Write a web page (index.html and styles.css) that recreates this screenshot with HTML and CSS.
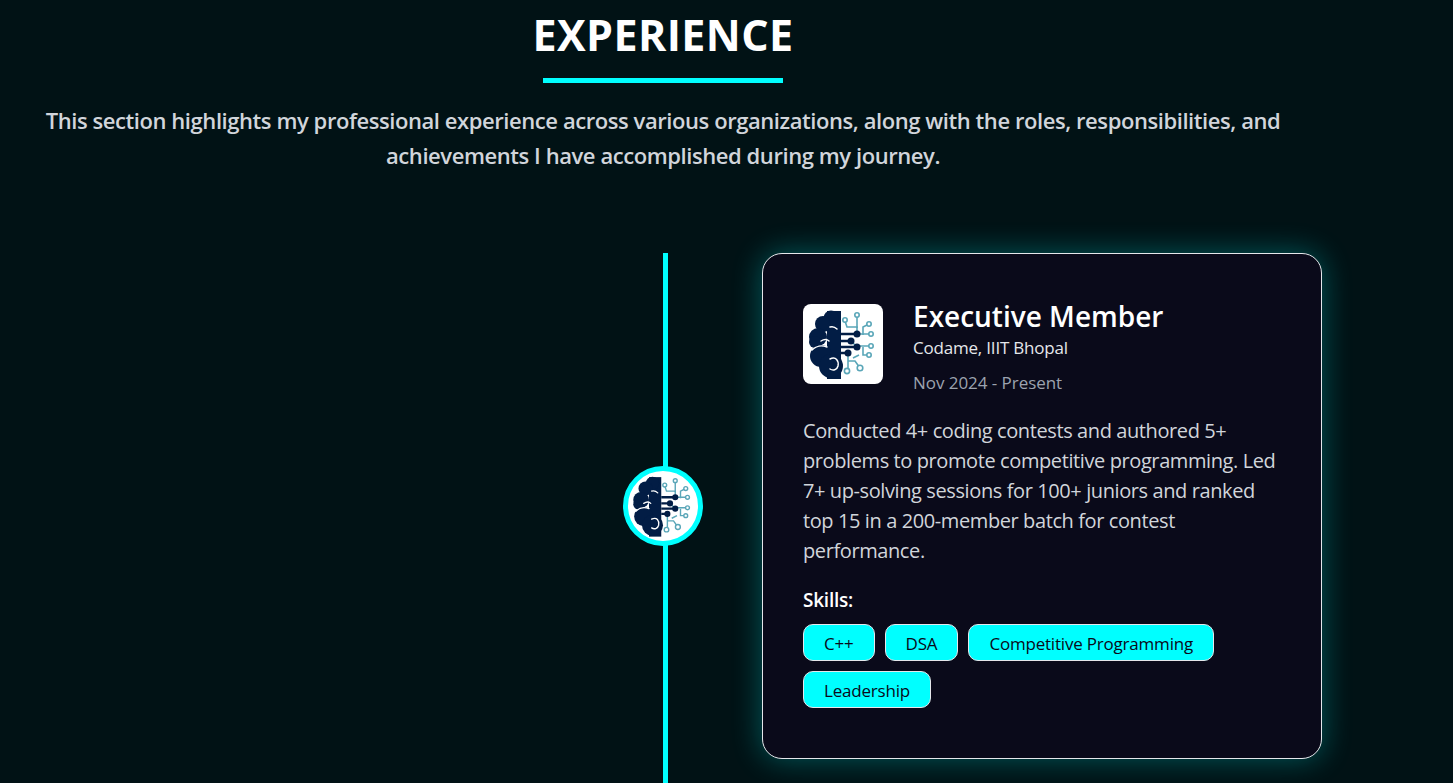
FILE: index.html
```html
<!DOCTYPE html>
<html>
<head>
    <title>Experience</title>
    <link rel="stylesheet" href="styles.css">
</head>
<body>
    <!-- Shared logo, drawn once and reused in the card and on the timeline -->
    <svg class="defs" width="0" height="0">
        <symbol id="brain-logo" viewBox="0 0 80 80">
            <g fill="none" stroke="#5aa6b8" stroke-width="1.6">
                <path d="M42 17l2 6h10v6"/>
                <path d="M54 12v12"/>
                <path d="M66 20l-6 3v8"/>
                <path d="M68 30H56"/>
                <path d="M68 42H56"/>
                <path d="M66 51h-6v-8"/>
                <path d="M49 38l6 6"/>
                <path d="M45 49v17"/>
                <path d="M45 57h7l5 7"/>
                <path d="M50 54l6-3"/>
                <circle cx="42" cy="16" r="2.2" fill="#fff"/>
                <circle cx="54" cy="11" r="2.2" fill="#fff"/>
                <circle cx="66" cy="20" r="2.2" fill="#fff"/>
                <circle cx="68" cy="30" r="2.2" fill="#fff"/>
                <circle cx="68" cy="42" r="2.2" fill="#fff"/>
                <circle cx="66" cy="51" r="2.2" fill="#fff"/>
                <circle cx="44" cy="67" r="2.6" fill="#fff"/>
                <circle cx="57" cy="64" r="2.8" fill="#fff"/>
            </g>
            <g fill="#021d45">
                <rect x="24" y="7" width="14" height="68"/>
                <circle cx="28" cy="14" r="7.5"/>
                <circle cx="20" cy="20" r="8"/>
                <circle cx="15" cy="33" r="9"/>
                <circle cx="12" cy="38" r="6"/>
                <circle cx="18" cy="52" r="11"/>
                <circle cx="28" cy="62" r="12"/>
            </g>
            <g fill="none" stroke="#fff" stroke-width="1.5" stroke-linecap="round">
                <path d="M9 46c4-4 10-5 15-3"/>
                <path d="M18 37c3-2 6-2 8 0"/>
                <path d="M27 23c3-1 5 0 7 2"/>
                <path d="M27 55c6-3 9 2 8 7-1 4-5 5-8 3"/>
            </g>
            <g stroke="#021d45" stroke-width="2.6">
                <path d="M38 30h16"/>
                <path d="M38 37h10"/>
                <path d="M38 43h16"/>
                <path d="M38 49h7"/>
            </g>
            <circle cx="54" cy="30" r="3.5" fill="#021d45"/>
            <circle cx="48" cy="37" r="3.5" fill="#021d45"/>
            <circle cx="54" cy="43" r="3.5" fill="#021d45"/>
            <circle cx="45" cy="49" r="3.5" fill="#021d45"/>
        </symbol>
    </svg>

    <section class="experience">
        <h1>EXPERIENCE</h1>
        <div class="underline"></div>
        <p class="intro">This section highlights my professional experience across various organizations, along with the roles, responsibilities, and achievements I have accomplished during my journey.</p>

        <div class="timeline">
            <div class="timeline-line"></div>
            <div class="timeline-row">
                <div class="timeline-dot">
                    <svg class="dot-logo"><use href="#brain-logo"/></svg>
                </div>
                <div class="card">
                    <div class="card-head">
                        <svg class="card-logo"><use href="#brain-logo"/></svg>
                        <div class="card-info">
                            <h2>Executive Member</h2>
                            <div class="company">Codame, IIIT Bhopal</div>
                            <div class="dates">Nov 2024 - Present</div>
                        </div>
                    </div>
                    <p class="desc">Conducted 4+ coding contests and authored 5+ problems to promote competitive programming. Led 7+ up-solving sessions for 100+ juniors and ranked top 15 in a 200-member batch for contest performance.</p>
                    <div class="skills-label">Skills:</div>
                    <div class="skills">
                        <span class="skill">C++</span>
                        <span class="skill">DSA</span>
                        <span class="skill">Competitive Programming</span>
                        <span class="skill">Leadership</span>
                    </div>
                </div>
            </div>
        </div>
    </section>
</body>
</html>
```

FILE: styles.css
```css
* {
    box-sizing: border-box;
}

html, body {
    height: 100%;
}

body {
    margin: 0;
    overflow: hidden;
    background: #011215;
    color: #fff;
    font-family: "Open Sans", "Noto Sans", sans-serif;
}

.defs {
    display: block;
}

.experience {
    width: 1326px;
    padding-top: 5px;
}

h1 {
    margin: 0;
    font-size: 43px;
    line-height: 60px;
    font-weight: 700;
    text-align: center;
    letter-spacing: 0.4px;
}

.underline {
    width: 240px;
    height: 5px;
    margin: 13px auto 0;
    background: #00ffff;
}

.intro {
    margin: 20px auto 0;
    width: 1250px;
    font-size: 22px;
    line-height: 35px;
    font-weight: 600;
    text-align: center;
    color: #d1d5db;
    letter-spacing: -0.43px;
}

.timeline {
    position: relative;
    margin-top: 80px;
    height: 640px;
}

.timeline-line {
    position: absolute;
    top: 0;
    bottom: 0;
    left: 663px;
    width: 5px;
    background: #00ffff;
}

.timeline-row {
    position: relative;
    display: flex;
    align-items: center;
    padding-left: 623px;
    gap: 59px;
    width: 1322px;
}

.timeline-dot {
    flex: none;
    width: 80px;
    height: 80px;
    border: 5px solid #00ffff;
    border-radius: 50%;
    background: #fff;
    overflow: hidden;
}

.dot-logo {
    display: block;
    width: 70px;
    height: 70px;
}

.card {
    flex: 1;
    padding: 40px 40px 50px;
    background: #0a0a1a;
    border: 1px solid #e5e7eb;
    border-radius: 20px;
    box-shadow: 0 0 30px rgba(0, 255, 255, 0.3);
}

.card-head {
    display: flex;
    gap: 30px;
    margin-top: 10px;
}

.card-logo {
    flex: none;
    width: 80px;
    height: 80px;
    background: #fff;
    border-radius: 8px;
}

.card-info h2 {
    margin: 0;
    font-size: 28px;
    line-height: 24px;
    font-weight: 600;
}

.company {
    margin-top: 9px;
    font-size: 17px;
    line-height: 22px;
    color: #e5e7eb;
    letter-spacing: -0.2px;
}

.dates {
    margin-top: 13px;
    font-size: 17px;
    line-height: 22px;
    color: #9ca3af;
    letter-spacing: -0.05px;
}

.desc {
    margin: 22px 0 0;
    width: 476px;
    font-size: 20px;
    line-height: 30px;
    color: #d1d5db;
    letter-spacing: -0.4px;
}

.skills-label {
    margin-top: 22px;
    font-size: 19px;
    line-height: 24px;
    font-weight: 600;
    letter-spacing: -0.25px;
}

.skills {
    display: flex;
    flex-wrap: wrap;
    gap: 10px;
    margin-top: 12px;
}

.skill {
    padding: 0 20px;
    height: 37px;
    line-height: 38px;
    font-size: 17px;
    color: #0a0a1a;
    background: #00ffff;
    border: 1px solid #e5e7eb;
    border-radius: 10px;
    letter-spacing: -0.2px;
}
```
